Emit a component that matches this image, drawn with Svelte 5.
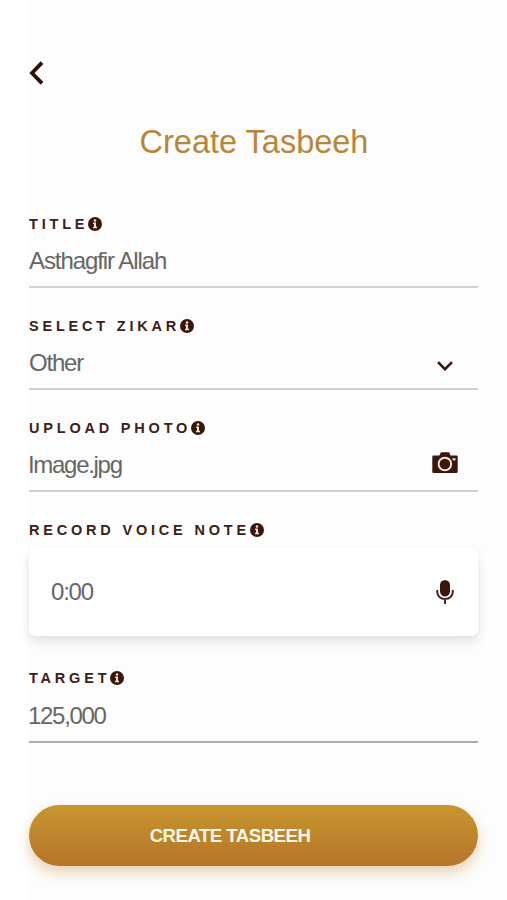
<script lang="ts">
    let title = $state("Asthagfir Allah");
    let zikar = $state("Other");
    let photo = $state("Image.jpg");
    let duration = $state("0:00");
    let target = $state("125,000");
</script>

{#snippet label(text: string)}
    <div class="label">
        <span>{text}</span>
        <svg class="info" viewBox="0 0 14 14">
            <circle cx="7" cy="7" r="7" fill="#3a160b" />
            <circle cx="7" cy="3.5" r="1.3" fill="#f3dfd3" />
            <path d="M5.1 5.6H8v4.2h1v1.400H5V9.800h1V7h-.9z" fill="#f3dfd3" />
        </svg>
    </div>
{/snippet}

<main>
    <button class="back" aria-label="Back">
        <svg viewBox="0 0 16 26">
            <path d="M13 2.600 3 13l10 10.400" fill="none" stroke="#2d1109" stroke-width="3.800" />
        </svg>
    </button>

    <h1>Create Tasbeeh</h1>

    <div class="field">
        {@render label("TITLE")}
        <div class="value title">
            <input type="text" aria-label="Title" bind:value={title} />
        </div>
    </div>

    <div class="field">
        {@render label("SELECT ZIKAR")}
        <div class="value">
            <span>{zikar}</span>
            <svg class="chevron" viewBox="0 0 16 10">
                <path d="M1 1.200 8 8.200l7-7" fill="none" stroke="#35150c" stroke-width="2.600" />
            </svg>
        </div>
    </div>

    <div class="field">
        {@render label("UPLOAD PHOTO")}
        <div class="value photo">
            <span>{photo}</span>
            <svg class="camera" viewBox="0 0 26 22">
                <path d="M1.500 3.600H7.500l1-2.600q.2-.8 1-.8h7q.8 0 1 .8l1 2.600h6q1.200 0 1.200 1.200v15q0 1.200-1.200 1.200h-23Q.3 21 .3 19.800v-15Q.3 3.600 1.500 3.600z" fill="#3a160b" />
                <circle cx="12.900" cy="12" r="6.300" fill="none" stroke="#f6e6dc" stroke-width="1.900" />
                <path d="M20.500 6.300h3v2h-3z" fill="#f6e6dc" />
            </svg>
        </div>
    </div>

    <div class="field voice">
        {@render label("RECORD VOICE NOTE")}
        <div class="recorder">
            <span>{duration}</span>
            <svg class="mic" viewBox="0 0 18 25">
                <rect x="4" y=".2" width="10" height="16.200" rx="4.800" fill="#3a160b" />
                <path d="M1.200 10v1.800c0 4.300 3.300 7.200 7.800 7.200s7.800-2.900 7.800-7.200V10M9 19v5" fill="none" stroke="#3f2a22" stroke-width="2" />
            </svg>
        </div>
    </div>

    <div class="field target">
        {@render label("TARGET")}
        <div class="value">
            <input type="text" aria-label="Target" bind:value={target} />
        </div>
    </div>

    <button class="submit">CREATE TASBEEH</button>
</main>

<style>
    :global(body) {
        background: #fdfdfd;
    }

    main {
        box-sizing: border-box;
        width: 100%;
        height: 900px;
        padding: 60px 29px 0;
        display: flex;
        flex-direction: column;
        background: linear-gradient(to right, #fff 26px, #fdfdfd 26px);
        font-family: "Liberation Sans", Arial, sans-serif;
        overflow: hidden;
    }

    button {
        border: none;
        padding: 0;
        font-family: inherit;
    }

    .back {
        align-self: flex-start;
        height: 26px;
        background: none;
    }

    .back svg {
        display: block;
        width: 16px;
        height: 26px;
    }

    h1 {
        margin: 36px 0 0;
        padding-left: 1px;
        height: 40px;
        line-height: 40px;
        font-size: 32.5px;
        font-weight: 400;
        text-align: center;
        color: #bb8538;
    }

    .field {
        margin-top: 28px;
    }

    h1 + .field {
        margin-top: 52px;
    }

    .label {
        display: flex;
        align-items: center;
        height: 20px;
        font-size: 14.5px;
        font-weight: 700;
        letter-spacing: 3.8px;
        color: #3c2119;
    }

    .info {
        width: 14px;
        height: 14px;
    }

    .value {
        display: flex;
        align-items: center;
        justify-content: space-between;
        box-sizing: border-box;
        height: 54px;
        padding-top: 2px;
        border-bottom: 2px solid #d0d0d0;
        font-size: 24px;
        letter-spacing: -1.2px;
        color: #666;
    }

    .title {
        letter-spacing: -1.08px;
    }

    .photo {
        letter-spacing: -1.3px;
    }

    .photo span {
        margin-left: -1px;
    }

    .target .value {
        height: 55px;
        border-color: #acacac;
        letter-spacing: -1.3px;
    }

    input {
        width: 100%;
        padding: 0;
        border: none;
        outline: none;
        background: none;
        font: inherit;
        letter-spacing: inherit;
        color: inherit;
    }

    .target input {
        margin-left: -1px;
    }

    .chevron {
        width: 16px;
        height: 10px;
        margin: 5px 25px 0 0;
    }

    .camera {
        width: 26px;
        height: 22px;
        margin: 0 20px 5px 0;
    }

    .recorder {
        display: flex;
        align-items: center;
        justify-content: space-between;
        box-sizing: border-box;
        height: 88px;
        margin-top: 8px;
        padding: 0 24px 0 22px;
        border-radius: 7px;
        background: #fff;
        box-shadow: 0 6px 11px rgba(0, 0, 0, 0.11);
        font-size: 24px;
        letter-spacing: -1.2px;
        color: #666;
    }

    .mic {
        width: 18px;
        height: 25px;
    }

    .target {
        margin-top: 32px;
    }

    .submit {
        margin-top: 62px;
        height: 61px;
        padding-right: 47px;
        border-radius: 31px;
        background: linear-gradient(#c8962e, #b5742a);
        box-shadow: 0 7px 14px rgba(200, 135, 50, 0.36);
        font-size: 18.6px;
        font-weight: 700;
        letter-spacing: -0.5px;
        color: #fff8e8;
    }
</style>
